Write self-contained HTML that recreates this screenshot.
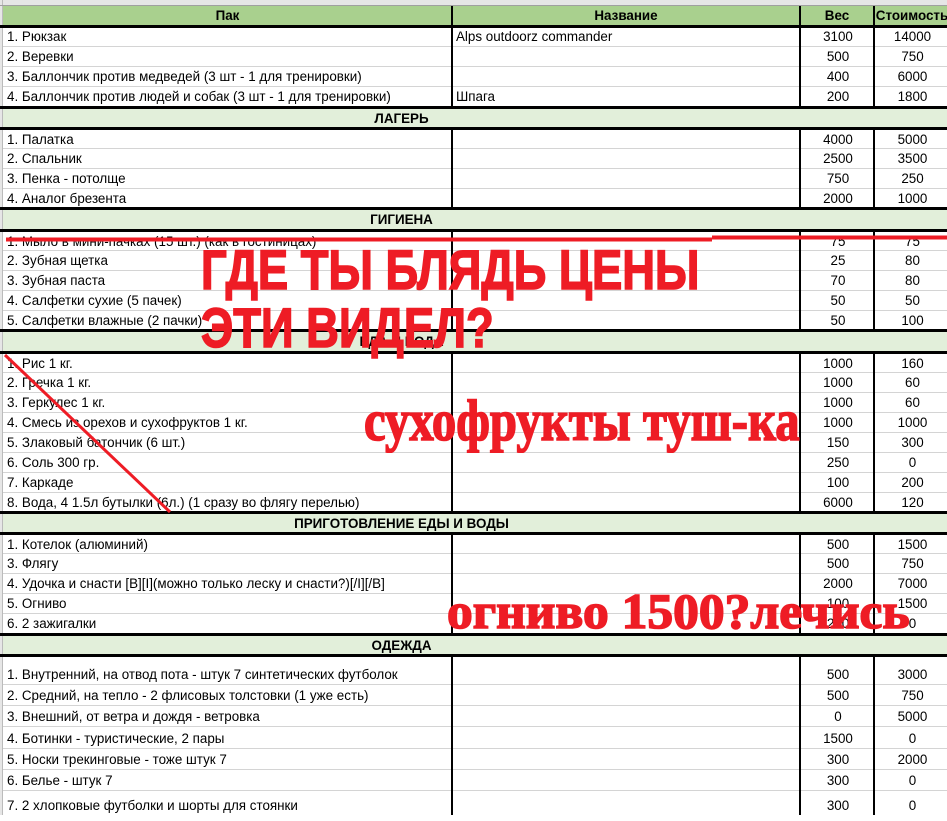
<!DOCTYPE html>
<html><head><meta charset="utf-8"><style>
*{margin:0;padding:0;box-sizing:border-box}
body{width:947px;height:815px;overflow:hidden;background:#fff;position:relative;font-family:"Liberation Sans","DejaVu Sans",sans-serif;font-size:13.4px;color:#000}
.r{position:absolute;left:3px;width:944px;border-bottom:1px solid #d4d4d4}
.r span{position:absolute;top:0;white-space:nowrap}
.a{left:4px}.b{left:453px}.c{left:798px;width:74px;text-align:center}.d{left:872px;width:75px;text-align:center}
.h{position:absolute;left:3px;width:944px;background:#e2efda;font-weight:bold;text-align:center}
.h span{position:absolute;left:0;width:797px;text-align:center}
.bl{position:absolute;left:0;width:947px;height:3px;background:#000}
.v{position:absolute;width:2px;background:#000}
.red{position:absolute;color:#ee1c25;font-weight:bold;white-space:nowrap;transform-origin:0 0;-webkit-text-stroke:1.6px #ee1c25}
</style></head><body>
<div style="position:absolute;left:0;top:0;width:947px;height:6px;background:#e6e6e6;border-bottom:1px solid #a0a0a0"></div>
<div style="position:absolute;left:0;top:0;width:3px;height:815px;background:#e6e6e6;border-right:1px solid #bbb"></div>
<div style="position:absolute;left:3px;top:6px;width:944px;height:19px;background:#a9d08e;font-weight:bold;line-height:19px">
<span style="position:absolute;left:0;width:449px;text-align:center">Пак</span>
<span style="position:absolute;left:449px;width:348px;text-align:center">Название</span>
<span style="position:absolute;left:797px;width:74px;text-align:center">Вес</span>
<span style="position:absolute;left:871px;width:76px;text-align:center">Стоимость</span></div>
<div class="bl" style="top:25px"></div>

<div class="r" style="top:27px;height:20px;line-height:20px"><span class="a">1. Рюкзак</span><span class="b">Alps outdoorz commander</span><span class="c">3100</span><span class="d">14000</span></div>
<div class="r" style="top:47px;height:20px;line-height:20px"><span class="a">2. Веревки</span><span class="c">500</span><span class="d">750</span></div>
<div class="r" style="top:67px;height:20px;line-height:20px"><span class="a">3. Баллончик против медведей (3 шт - 1 для тренировки)</span><span class="c">400</span><span class="d">6000</span></div>
<div class="r" style="top:87px;height:20px;line-height:20px;border:0"><span class="a">4. Баллончик против людей и собак (3 шт - 1 для тренировки)</span><span class="b">Шпага</span><span class="c">200</span><span class="d">1800</span></div>
<div class="bl" style="top:106px"></div>
<div class="h" style="top:109px;height:19px;line-height:19px"><span>ЛАГЕРЬ</span></div>
<div class="bl" style="top:127px"></div>
<div class="r" style="top:130px;height:19px;line-height:19px"><span class="a">1. Палатка</span><span class="c">4000</span><span class="d">5000</span></div>
<div class="r" style="top:149px;height:20px;line-height:20px"><span class="a">2. Спальник</span><span class="c">2500</span><span class="d">3500</span></div>
<div class="r" style="top:169px;height:20px;line-height:20px"><span class="a">3. Пенка - потолще</span><span class="c">750</span><span class="d">250</span></div>
<div class="r" style="top:189px;height:19px;line-height:19px;border:0"><span class="a">4. Аналог брезента</span><span class="c">2000</span><span class="d">1000</span></div>
<div class="bl" style="top:207px"></div>
<div class="h" style="top:210px;height:20px;line-height:20px"><span>ГИГИЕНА</span></div>
<div class="bl" style="top:229px"></div>
<div class="r" style="top:232px;height:19px;line-height:19px"><span class="a">1. Мыло в мини-пачках (15 шт.) (как в гостиницах)</span><span class="c">75</span><span class="d">75</span></div>
<div class="r" style="top:251px;height:20px;line-height:20px"><span class="a">2. Зубная щетка</span><span class="c">25</span><span class="d">80</span></div>
<div class="r" style="top:271px;height:20px;line-height:20px"><span class="a">3. Зубная паста</span><span class="c">70</span><span class="d">80</span></div>
<div class="r" style="top:291px;height:20px;line-height:20px"><span class="a">4. Салфетки сухие (5 пачек)</span><span class="c">50</span><span class="d">50</span></div>
<div class="r" style="top:311px;height:19px;line-height:19px;border:0"><span class="a">5. Салфетки влажные (2 пачки)</span><span class="c">50</span><span class="d">100</span></div>
<div class="bl" style="top:329px"></div>
<div class="h" style="top:332px;height:19px;line-height:19px"><span>ЕДА И ВОДА</span></div>
<div class="bl" style="top:351px"></div>
<div class="r" style="top:354px;height:19px;line-height:19px"><span class="a">1. Рис 1 кг.</span><span class="c">1000</span><span class="d">160</span></div>
<div class="r" style="top:373px;height:20px;line-height:20px"><span class="a">2. Гречка 1 кг.</span><span class="c">1000</span><span class="d">60</span></div>
<div class="r" style="top:393px;height:20px;line-height:20px"><span class="a">3. Геркулес 1 кг.</span><span class="c">1000</span><span class="d">60</span></div>
<div class="r" style="top:413px;height:20px;line-height:20px"><span class="a">4. Смесь из орехов и сухофруктов 1 кг.</span><span class="c">1000</span><span class="d">1000</span></div>
<div class="r" style="top:433px;height:20px;line-height:20px"><span class="a">5. Злаковый батончик (6 шт.)</span><span class="c">150</span><span class="d">300</span></div>
<div class="r" style="top:453px;height:20px;line-height:20px"><span class="a">6. Соль 300 гр.</span><span class="c">250</span><span class="d">0</span></div>
<div class="r" style="top:473px;height:20px;line-height:20px"><span class="a">7. Каркаде</span><span class="c">100</span><span class="d">200</span></div>
<div class="r" style="top:493px;height:19px;line-height:19px;border:0"><span class="a">8. Вода, 4 1.5л бутылки (6л.) (1 сразу во флягу перелью)</span><span class="c">6000</span><span class="d">120</span></div>
<div class="bl" style="top:511px"></div>
<div class="h" style="top:514px;height:19px;line-height:19px"><span>ПРИГОТОВЛЕНИЕ ЕДЫ И ВОДЫ</span></div>
<div class="bl" style="top:532px"></div>
<div class="r" style="top:535px;height:19px;line-height:19px"><span class="a">1. Котелок (алюминий)</span><span class="c">500</span><span class="d">1500</span></div>
<div class="r" style="top:554px;height:20px;line-height:20px"><span class="a">3. Флягу</span><span class="c">500</span><span class="d">750</span></div>
<div class="r" style="top:574px;height:20px;line-height:20px"><span class="a">4. Удочка и снасти [B][I](можно только леску и снасти?)[/I][/B]</span><span class="c">2000</span><span class="d">7000</span></div>
<div class="r" style="top:594px;height:20px;line-height:20px"><span class="a">5. Огниво</span><span class="c">100</span><span class="d">1500</span></div>
<div class="r" style="top:614px;height:20px;line-height:20px;border:0"><span class="a">6. 2 зажигалки</span><span class="c">200</span><span class="d">0</span></div>
<div class="bl" style="top:633px"></div>
<div class="h" style="top:636px;height:19px;line-height:19px"><span>ОДЕЖДА</span></div>
<div class="bl" style="top:654px"></div>
<div class="r" style="top:657px;height:28px;line-height:36px"><span class="a">1. Внутренний, на отвод пота - штук 7 синтетических футболок</span><span class="c">500</span><span class="d">3000</span></div>
<div class="r" style="top:685px;height:21px;line-height:21px"><span class="a">2. Средний, на тепло - 2 флисовых толстовки (1 уже есть)</span><span class="c">500</span><span class="d">750</span></div>
<div class="r" style="top:706px;height:21px;line-height:21px"><span class="a">3. Внешний, от ветра и дождя - ветровка</span><span class="c">0</span><span class="d">5000</span></div>
<div class="r" style="top:727px;height:22px;line-height:24px"><span class="a">4. Ботинки - туристические, 2 пары</span><span class="c">1500</span><span class="d">0</span></div>
<div class="r" style="top:749px;height:21px;line-height:21px"><span class="a">5. Носки трекинговые - тоже штук 7</span><span class="c">300</span><span class="d">2000</span></div>
<div class="r" style="top:770px;height:21px;line-height:21px"><span class="a">6. Белье - штук 7</span><span class="c">300</span><span class="d">0</span></div>
<div class="r" style="top:791px;height:24px;line-height:30px;border:0"><span class="a">7. 2 хлопковые футболки и шорты для стоянки</span><span class="c">300</span><span class="d">0</span></div>

<div class="v" style="left:451px;top:6px;height:101px"></div><div class="v" style="left:799px;top:6px;height:101px"></div><div class="v" style="left:873px;top:6px;height:101px"></div>
<div class="v" style="left:451px;top:128px;height:80px"></div><div class="v" style="left:799px;top:128px;height:80px"></div><div class="v" style="left:873px;top:128px;height:80px"></div>
<div class="v" style="left:451px;top:230px;height:100px"></div><div class="v" style="left:799px;top:230px;height:100px"></div><div class="v" style="left:873px;top:230px;height:100px"></div>
<div class="v" style="left:451px;top:352px;height:160px"></div><div class="v" style="left:799px;top:352px;height:160px"></div><div class="v" style="left:873px;top:352px;height:160px"></div>
<div class="v" style="left:451px;top:533px;height:101px"></div><div class="v" style="left:799px;top:533px;height:101px"></div><div class="v" style="left:873px;top:533px;height:101px"></div>
<div class="v" style="left:451px;top:655px;height:160px"></div><div class="v" style="left:799px;top:655px;height:160px"></div><div class="v" style="left:873px;top:655px;height:160px"></div>
<div style="position:absolute;left:0;top:5px;width:947px;height:1px;background:#a0a0a0"></div>

<svg style="position:absolute;left:0;top:0" width="947" height="815">
<line x1="6" y1="239.5" x2="712" y2="239.5" stroke="#ee1c25" stroke-width="4"/>
<line x1="712" y1="237.5" x2="947" y2="237.5" stroke="#ee1c25" stroke-width="4"/>
<line x1="5" y1="355" x2="170" y2="512" stroke="#ee1c25" stroke-width="3"/>
</svg>
<div class="red" style="left:201px;top:242px;font-size:56px;line-height:56px;transform:scaleX(0.81)">ГДЕ ТЫ БЛЯДЬ ЦЕНЫ</div>
<div class="red" style="left:201px;top:300px;font-size:56px;line-height:56px;transform:scaleX(0.81)">ЭТИ ВИДЕЛ?</div>
<div class="red" style="left:364px;top:388px;font-size:58px;line-height:66px;font-family:'Liberation Serif',serif;transform:scaleX(0.84)">сухофрукты туш-ка</div>
<div class="red" style="left:447px;top:584px;font-size:50px;line-height:54px;font-family:'Liberation Serif',serif;transform:scaleX(1.03)">огниво 1500?лечись</div>
</body></html>
